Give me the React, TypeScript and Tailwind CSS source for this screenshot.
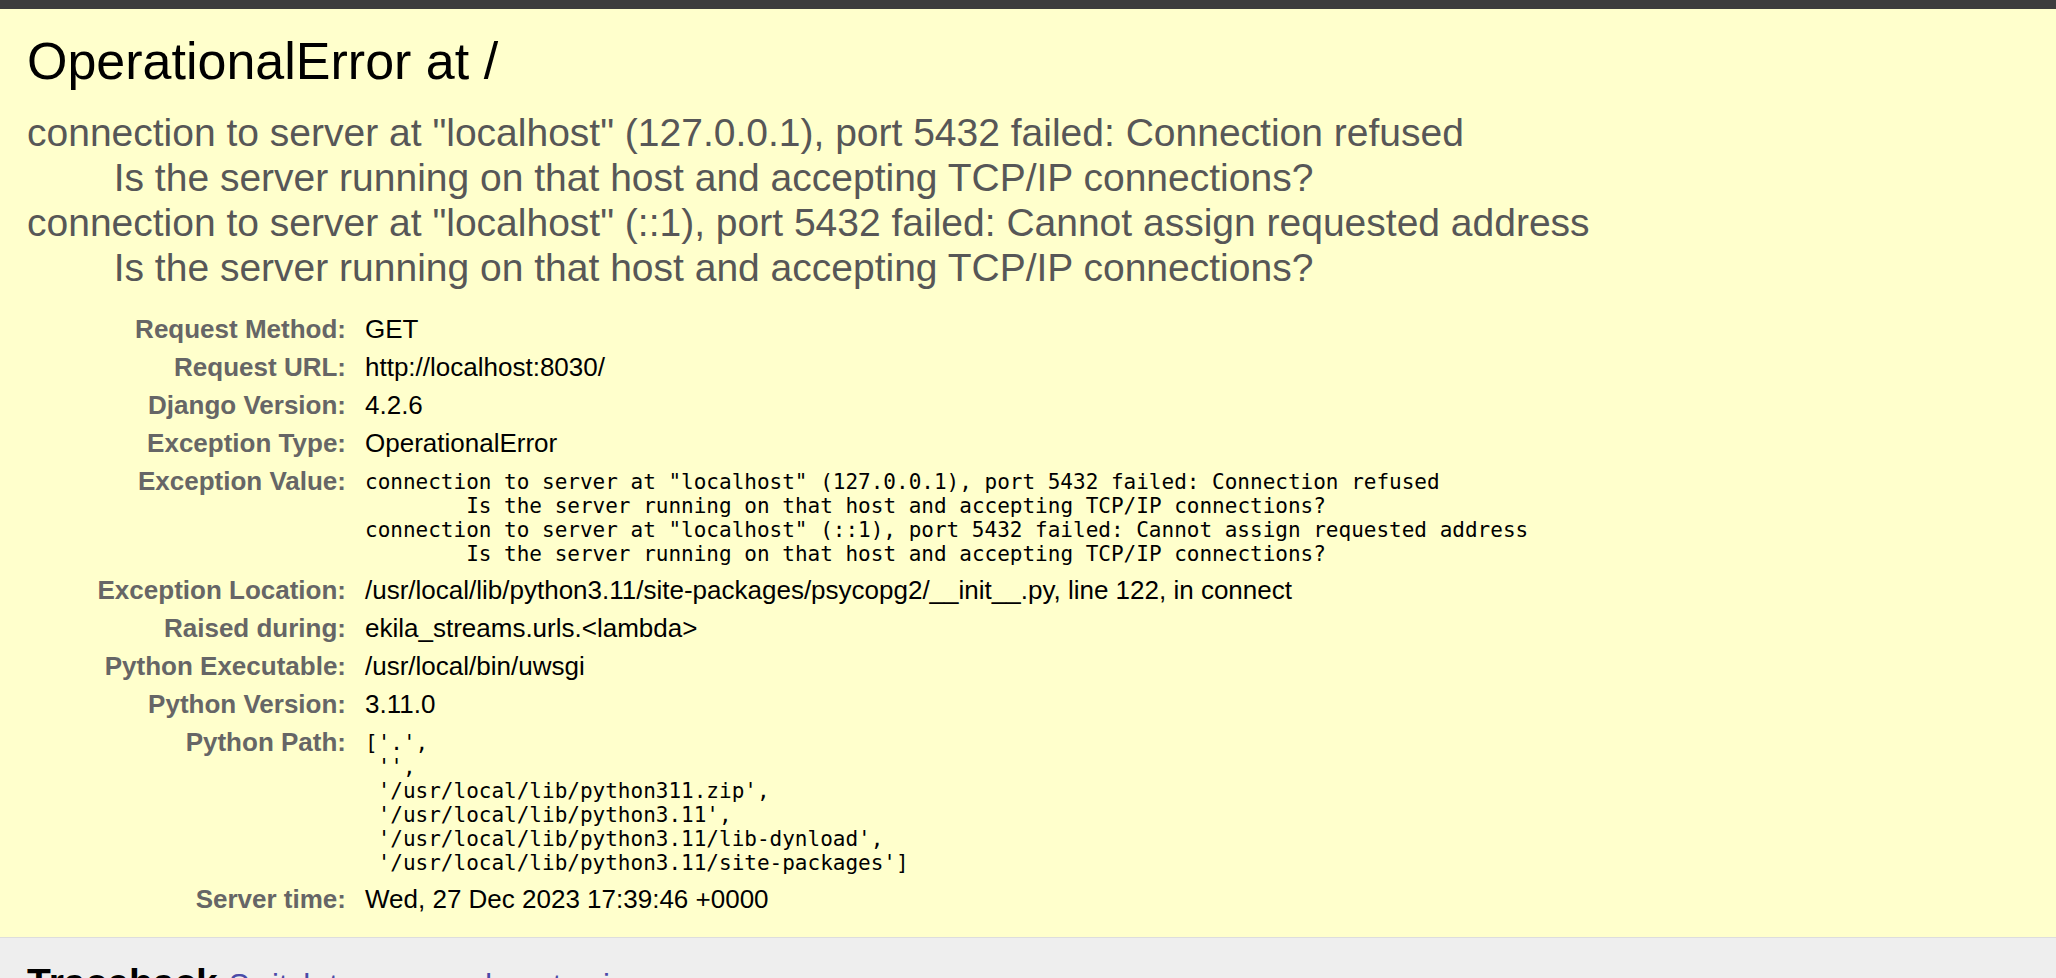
const SANS = "font-['Liberation_Sans',Arial,Helvetica,sans-serif]";
const MONO = "font-['DejaVu_Sans_Mono','Liberation_Mono',monospace]";

const exceptionValue =
  'connection to server at "localhost" (127.0.0.1), port 5432 failed: Connection refused\n' +
  '\tIs the server running on that host and accepting TCP/IP connections?\n' +
  'connection to server at "localhost" (::1), port 5432 failed: Cannot assign requested address\n' +
  '\tIs the server running on that host and accepting TCP/IP connections?';

const pythonPath =
  "['.',\n" +
  " '',\n" +
  " '/usr/local/lib/python311.zip',\n" +
  " '/usr/local/lib/python3.11',\n" +
  " '/usr/local/lib/python3.11/lib-dynload',\n" +
  " '/usr/local/lib/python3.11/site-packages']";

// label, value, and whether the value is shown as preformatted code
const META: { label: string; value: string; code?: boolean }[] = [
  { label: 'Request Method:', value: 'GET' },
  { label: 'Request URL:', value: 'http://localhost:8030/' },
  { label: 'Django Version:', value: '4.2.6' },
  { label: 'Exception Type:', value: 'OperationalError' },
  { label: 'Exception Value:', value: exceptionValue, code: true },
  { label: 'Exception Location:', value: '/usr/local/lib/python3.11/site-packages/psycopg2/__init__.py, line 122, in connect' },
  { label: 'Raised during:', value: 'ekila_streams.urls.<lambda>' },
  { label: 'Python Executable:', value: '/usr/local/bin/uwsgi' },
  { label: 'Python Version:', value: '3.11.0' },
  { label: 'Python Path:', value: pythonPath, code: true },
  { label: 'Server time:', value: 'Wed, 27 Dec 2023 17:39:46 +0000' },
];

export default function App() {
  return (
    <div className={`min-h-screen bg-[#eee] text-black ${SANS}`}>
      <div className="h-[9px] bg-[#3d3d3d]" />

      <header className="border-b border-[#ddd] bg-[#ffc] px-[27px] pt-[22px] pb-[19px]">
        <h1 className="text-[52px] leading-[60px] font-normal">OperationalError at /</h1>
        <pre className={`mt-[19px] whitespace-pre text-[39px] leading-[45px] text-[#575757] [tab-size:8] ${SANS}`}>
          {exceptionValue}
        </pre>

        <div className="mt-[20px] ml-px grid grid-cols-[331px_1fr] text-[26px] leading-[30px]">
          {META.map((row) => (
            <div key={row.label} className="contents">
              <div className={`pr-[13px] text-right font-bold text-[#666] ${row.code ? 'pt-[4px] pb-[9px]' : 'py-[4px]'}`}>
                {row.label}
              </div>
              <div className={`px-[6px] ${row.code ? 'pt-[8px] pb-[5px]' : 'py-[4px]'}`}>
                {row.code ? (
                  <pre className={`whitespace-pre text-[21px] leading-[24px] [tab-size:8] ${MONO}`}>{row.value}</pre>
                ) : (
                  row.value
                )}
              </div>
            </div>
          ))}
        </div>
      </header>

      <div className="px-[27px] pt-[22px]">
        <h2 className="text-[39px] leading-[45px] font-bold">
          Traceback{' '}
          <span className="text-[31.2px] font-normal">
            <a href="#" className="text-[#4a4aa8]">Switch to copy-and-paste view</a>
          </span>
        </h2>
      </div>
    </div>
  );
}
